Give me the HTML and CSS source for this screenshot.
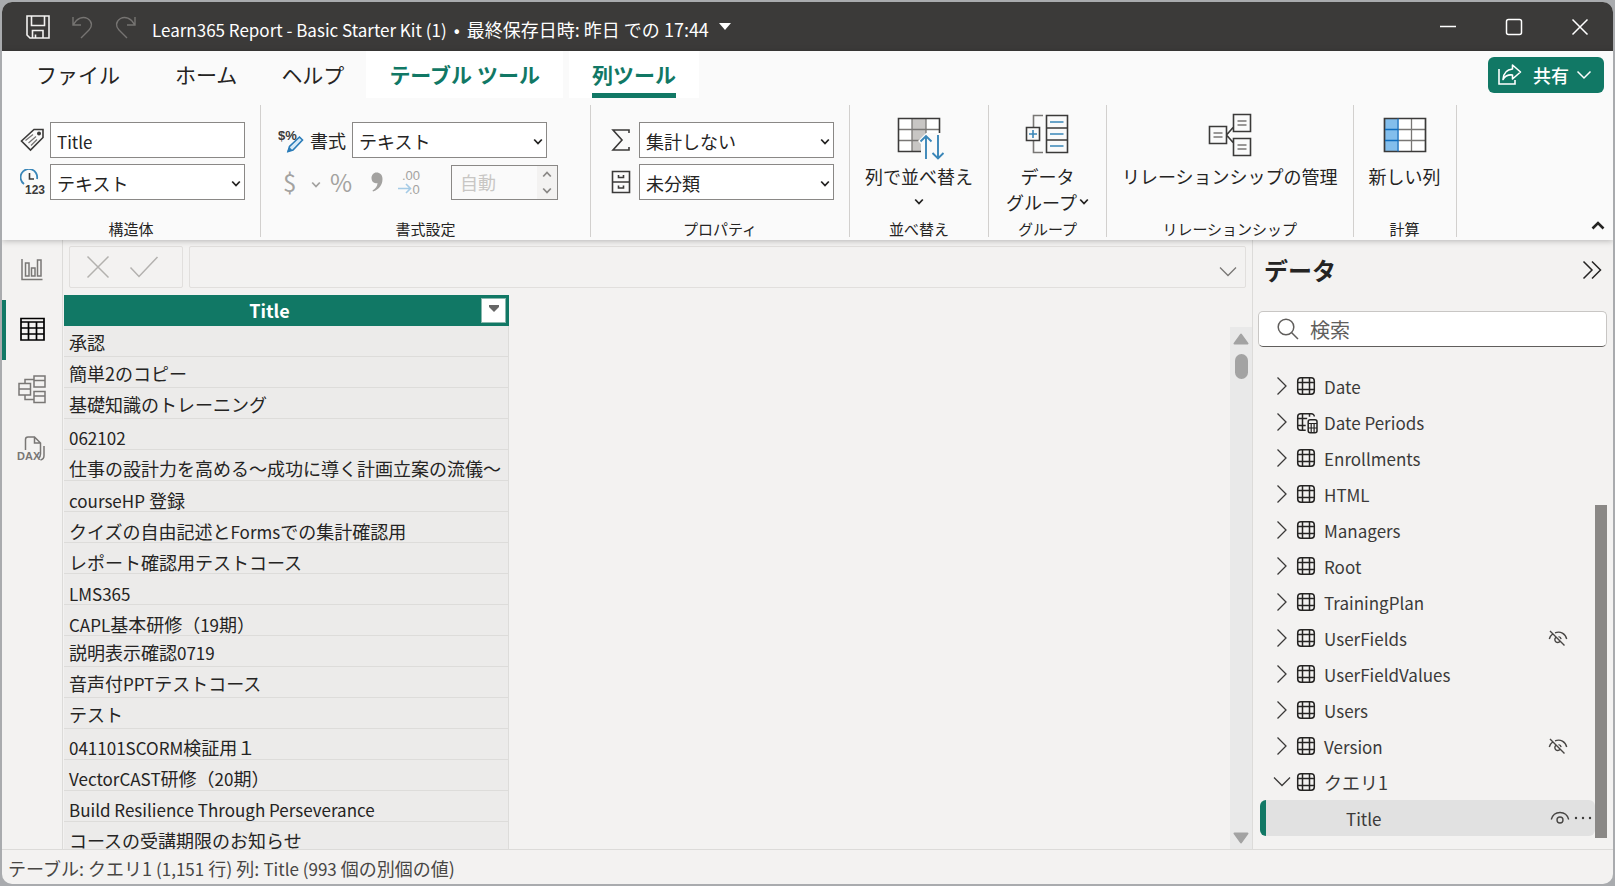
FILE: index.html
```
<!DOCTYPE html>
<html lang="ja">
<head>
<meta charset="utf-8">
<title>Learn365 Report - Basic Starter Kit (1)</title>
<link rel="stylesheet" href="styles.css">
</head>
<body>
<svg class="defs" aria-hidden="true">
  <symbol id="chev-right" viewBox="0 0 12 20"><path d="M1.500 1.500l8.500 8.500l-8.500 8.500" fill="none" stroke="currentColor" stroke-width="1.300"/></symbol>
  <symbol id="chev-down-wide" viewBox="0 0 18 12"><path d="M1 1.500l8 8l8-8" fill="none" stroke="currentColor" stroke-width="1.300"/></symbol>
  <symbol id="chev-small" viewBox="0 0 10 8"><path d="M1.200 1.500L5 5.500l3.800-4" fill="none" stroke="currentColor" stroke-width="1.800"/></symbol>
  <symbol id="tbl" viewBox="0 0 22 22"><g fill="none" stroke="#252423" stroke-width="1.500"><rect x="1.700" y="1.700" width="16.600" height="16.600" rx="3.200"/><path d="M6.500 1.700v16.600M13.500 1.700v16.600M1.700 6.500h16.600M1.700 13.500h16.600"/></g></symbol>
  <symbol id="tbl-calc" viewBox="0 0 22 22"><g fill="none" stroke="#252423" stroke-width="1.500"><path d="M18.300 4.500c0-1.700-1.300-2.800-3-2.800H4.700c-1.700 0-3 1.300-3 3v10.600c0 1.700 1.300 3 3 3h5M6.500 1.700v16.600M13.500 1.700v3M1.700 6.500h9.500M1.700 13.500h8"/><rect x="12.200" y="7.700" width="8.800" height="13" rx="2"/><path d="M12.200 11.500h8.800M12.200 16h8.800M15.200 11.500v9M18.100 11.500v9" stroke-width="1.200"/></g></symbol>
  <symbol id="eye" viewBox="0 0 20 16"><g fill="none" stroke="#484644" stroke-width="1.400"><path d="M1.300 9.500C2.500 5 6 2.500 10 2.500S17.500 5 18.700 9.500"/><circle cx="10" cy="10" r="3"/></g></symbol>
  <symbol id="eye-off" viewBox="0 0 20 16"><g fill="none" stroke="#484644" stroke-width="1.400"><path d="M1.300 9C2 6.500 3.200 5 4.600 4M7 2.800C12.500 .8 17.300 3.500 18.700 9M7.700 7.400A3 3 0 1 0 12 11.600M10.500 6.600a3 3 0 0 1 2.600 2.600M2 1l14.500 14.500"/></g></symbol>
</svg>

<div class="window">
  <header class="titlebar">
    <button class="tool" aria-label="保存"><svg width="24" height="24" viewBox="0 0 24 24" fill="none" stroke="#f3f2f1" stroke-width="1.600"><path d="M1 1h22v22H4l-3-3zM5.500 1v9.500h13V1M6.500 23v-7.500h10.500V23M9.500 23v-3.500"/></svg></button>
    <button class="tool" aria-label="元に戻す"><svg width="24" height="24" viewBox="0 0 24 24" fill="none" stroke="#767472" stroke-width="1.400"><path d="M3 2v8h8M3.500 9.500C7 3 13 1 17.500 3.500c5 3 5 8 1.500 11.500l-8 8"/></svg></button>
    <button class="tool" aria-label="やり直し"><svg width="24" height="24" viewBox="0 0 24 24" fill="none" stroke="#767472" stroke-width="1.400"><path d="M21 2v8h-8M20.500 9.500C17 3 11 1 6.500 3.500c-5 3-5 8-1.500 11.500l8 8"/></svg></button>
    <button class="doc-title"><span class="latin">Learn365 Report - Basic Starter Kit (1)</span><span class="dot">•</span>最終保存日時: 昨日 での 17:44
      <svg width="12" height="7" viewBox="0 0 12 7"><path d="M0 0h12L6 7z" fill="#fff"/></svg></button>
    <div class="win-buttons">
      <button aria-label="最小化"><svg width="18" height="18" viewBox="0 0 18 18"><path d="M1 8.500h16" stroke="#fff" stroke-width="1.500"/></svg></button>
      <button aria-label="最大化"><svg width="18" height="18" viewBox="0 0 18 18"><rect x="1.500" y="1.500" width="15" height="15" rx="2" fill="none" stroke="#fff" stroke-width="1.500"/></svg></button>
      <button aria-label="閉じる"><svg width="18" height="18" viewBox="0 0 18 18"><path d="M1.500 1.500l15 15M16.500 1.500l-15 15" stroke="#fff" stroke-width="1.500"/></svg></button>
    </div>
  </header>

  <div class="ribbon">
    <nav class="tabs">
      <button class="tab file">ファイル</button>
      <button class="tab">ホーム</button>
      <button class="tab">ヘルプ</button>
      <button class="tab context">テーブル ツール</button>
      <button class="tab context current"><span>列ツール</span></button>
      <button class="share"><svg width="26" height="24" viewBox="0 0 26 24" fill="none" stroke="#fff" stroke-width="1.600"><path d="M2 6v15h16v-4"/><path d="M15.500 2l8 7l-8 7v-4c-4.500-.5-7.500 1-9.500 4.500C6.500 10 10 6.500 15.500 6z" stroke-linejoin="round"/></svg>共有<svg class="share-chev" width="16" height="10" viewBox="0 0 16 10"><path d="M1.500 1.500L8 8l6.500-6.500" fill="none" stroke="#fff" stroke-width="1.500"/></svg></button>
    </nav>

    <div class="groups">
      <section class="group structure">
        <div class="rows">
          <div class="row">
            <label for="name"><svg width="25" height="24" viewBox="0 0 25 24" fill="none" stroke="#3b3a39" stroke-width="1.600"><path d="M14 1.500h9v8L10.500 22L1.500 13z"/><circle cx="19" cy="5.500" r="1.200" fill="#3b3a39"/><path d="M5.500 12.500L13 6.500M8.500 15L16 8.500M11 17.500l6-6" stroke="#797775" stroke-width="1.300"/></svg></label>
            <input id="name" class="field latin" type="text" value="Title">
          </div>
          <div class="row">
            <label for="dtype"><svg width="26" height="26" viewBox="0 0 26 26"><path d="M4 15A8.300 8.300 0 1 1 17 10" fill="none" stroke="#3a86b8" stroke-width="1.800"/><path d="M9.500 4v6h4.500" fill="none" stroke="#3b3a39" stroke-width="1.600"/><text class="icon-num" x="5" y="25">123</text></svg></label>
            <div class="combo"><select id="dtype" class="field"><option>テキスト</option></select><svg width="10" height="8"><use href="#chev-small"/></svg></div>
          </div>
        </div>
        <h2>構造体</h2>
      </section>

      <section class="group format">
        <div class="rows">
          <div class="row">
            <label class="with-text" for="fmt"><svg width="26" height="26" viewBox="0 0 26 26"><text class="icon-cur" x="0" y="13">$%</text><path d="M10 24.500l1.500-5L21.500 10l3 3l-9.500 10z" fill="#d5e9f7" stroke="#2b7cb8" stroke-width="1.600"/><path d="M9 25l2.500-5l2.500 3z" fill="#2b7cb8"/></svg><span>書式</span></label>
            <div class="combo"><select id="fmt" class="field"><option>テキスト</option></select><svg width="10" height="8"><use href="#chev-small"/></svg></div>
          </div>
          <div class="row formats">
            <button disabled class="dollar" aria-label="通貨">$<svg width="10" height="8"><use href="#chev-small"/></svg></button>
            <button disabled class="percent" aria-label="パーセント">%</button>
            <button disabled aria-label="桁区切り"><svg width="12" height="20" viewBox="0 0 12 20"><path d="M5.500.5c3.500 0 6 2.300 6 6.500C11.500 13 8 17.500 2 19.500l-.5-1c3-1.800 5-4.500 5-7.500C3 12 .5 9.500.5 6C.500 3 2.500.5 5.500.500z" fill="#a3a2a0"/></svg></button>
            <button disabled aria-label="小数点以下の桁数"><svg width="26" height="28" viewBox="0 0 26 28"><text class="icon-dec" x="5" y="12">.00</text><text class="icon-dec" x="12" y="26">.0</text><path d="M1 20.500h12M9 16l4.500 4.500L9 25" fill="none" stroke="#a5cbe6" stroke-width="1.600"/></svg></button>
            <div class="spinner"><input type="text" value="自動" disabled aria-label="小数点以下"><span><svg width="10" height="8" class="flip"><use href="#chev-small"/></svg><svg width="10" height="8"><use href="#chev-small"/></svg></span></div>
          </div>
        </div>
        <h2>書式設定</h2>
      </section>

      <section class="group props">
        <div class="rows">
          <div class="row">
            <label for="summ"><svg width="20" height="24" viewBox="0 0 20 24" fill="none" stroke="#3b3a39" stroke-width="1.600"><path d="M18 5V2H2l9 10L2 22h16v-3"/></svg></label>
            <div class="combo"><select id="summ" class="field"><option>集計しない</option></select><svg width="10" height="8"><use href="#chev-small"/></svg></div>
          </div>
          <div class="row">
            <label for="cat"><svg width="20" height="24" viewBox="0 0 20 24" fill="none" stroke="#3b3a39" stroke-width="1.600"><path d="M1.500 1.500h17v21h-17zM1.500 12h17M7.500 5v2.500h5V5M7.500 15.500V18h5v-2.500"/></svg></label>
            <div class="combo"><select id="cat" class="field"><option>未分類</option></select><svg width="10" height="8"><use href="#chev-small"/></svg></div>
          </div>
        </div>
        <h2>プロパティ</h2>
      </section>

      <section class="group">
        <button class="big"><svg width="48" height="46" viewBox="0 0 48 46" fill="none"><path d="M3.500 5.500h41v33h-41z" fill="#fff"/><path d="M17 5.500h14v33H17z" fill="#c8c6c4"/><path d="M3.500 16.500h41M3.500 27.500h41M17 5.500v33M31 5.500v33" stroke="#797775" stroke-width="1.300"/><path d="M3.500 5.500h41v33h-41z" stroke="#3b3a39" stroke-width="1.600"/><path d="M31 20l-8 8l3 3v16h22V20z" fill="#fafafa"/><path d="M31 46V23M25.500 28.500L31 23l5.500 5.500M43 22v23M37.500 40l5.500 5.500l5.500-5.500" stroke="#3a86b8" stroke-width="1.900"/></svg>列で並べ替え<span class="drop"><svg width="10" height="8"><use href="#chev-small"/></svg></span></button>
        <h2>並べ替え</h2>
      </section>

      <section class="group">
        <button class="big wide"><svg width="48" height="46" viewBox="0 0 48 46" fill="none" stroke="#3b3a39" stroke-width="1.600"><path d="M20 2.500h-9.500v12M20 39.500h-9.500v-12" stroke="#797775"/><path d="M23.500 2.500h21v37h-21zM23.500 15h21M23.500 27h21M3.500 14.500h13v13h-13z"/><path d="M27 9h13.500M27 21h13.500M27 33h13.500M6 21h8M10 17v8" stroke="#3a86b8"/></svg>データ<span class="drop">グループ<svg width="10" height="8"><use href="#chev-small"/></svg></span></button>
        <h2>グループ</h2>
      </section>

      <section class="group">
        <button class="big"><svg width="48" height="46" viewBox="0 0 48 46" fill="none" stroke="#3b3a39" stroke-width="1.600"><path d="M3.500 13.500h17v17h-17zM27.500 1.500h17v17h-17zM27.500 25.500h17v17h-17zM20.500 22l7-8M20.500 22l7 8"/><path d="M7.500 20h9M7.500 24h9M31.500 8h9M31.500 12h9M31.500 32h9M31.500 36h9" stroke="#797775" stroke-width="1.300"/></svg>リレーションシップの管理</button>
        <h2>リレーションシップ</h2>
      </section>

      <section class="group">
        <button class="big"><svg width="48" height="46" viewBox="0 0 48 46" fill="none"><path d="M3.500 5.500h41v33h-41z" fill="#fff"/><path d="M3.500 5.500h13v33h-13z" fill="#83beec"/><path d="M17 16.500h28M17 27.500h28M30.500 5.500v33" stroke="#797775" stroke-width="1.300"/><path d="M3.500 5.500h41v33h-41z" stroke="#3b3a39" stroke-width="1.700"/><path d="M17 5.500v33M4 16.500h13M4 27.500h13" stroke="#0f6cbd" stroke-width="1.400"/></svg>新しい列</button>
        <h2>計算</h2>
      </section>

      <button class="collapse" aria-label="リボンを折りたたむ"><svg width="14" height="9" viewBox="0 0 14 9"><path d="M1.500 7.500L7 2l5.500 5.500" fill="none" stroke="#252423" stroke-width="2.600"/></svg></button>
    </div>
  </div>

  <div class="body">
    <nav class="views">
      <button aria-label="レポート ビュー"><svg width="28" height="28" viewBox="0 0 28 28" fill="none" stroke="#797775" stroke-width="1.500"><path d="M4 4v20.500h20.500M7.500 8h3.500v13h-3.500zM13.500 13h3.500v8h-3.500zM19.500 5h3.500v16h-3.500z"/></svg></button>
      <button class="on" aria-label="テーブル ビュー"><svg width="28" height="28" viewBox="0 0 28 28" fill="none" stroke="#000" stroke-width="1.700"><path d="M3 3.500h23v21.500H3zM3 7h23M3 13h23M3 19h23M10.500 7v18M18.500 7v18"/></svg></button>
      <button aria-label="モデル ビュー"><svg width="30" height="30" viewBox="0 0 30 30" fill="none" stroke="#797775" stroke-width="1.500"><path d="M17 2h11v11H17zM17 6.500h11M17 17.500h11v11H17zM17 22h11M2 9.500h11.500v11.500H2zM2 15h11.500M8 9.500V5.500h9M8 21v4.500h9"/></svg></button>
      <button aria-label="DAX クエリ ビュー"><svg width="34" height="28" viewBox="0 0 34 28" fill="none" stroke="#797775" stroke-width="1.500"><path d="M10.500 15V4.500c0-1.700 1-2.500 2.500-2.500h6.500l6 6v11c0 2-1 3.500-2 4.500M19.500 2v6h6M29 11v9.500c0 2.500-1 4-3.500 4.500"/><text class="icon-dax" x="2" y="25">DAX</text></svg></button>
    </nav>

    <main class="main">
      <div class="formula">
        <div class="commit">
          <button aria-label="キャンセル"><svg width="24" height="24" viewBox="0 0 24 24"><path d="M1.500 1.500l21 21M22.500 1.500l-21 21" stroke="#b3b1af" stroke-width="1.500"/></svg></button>
          <button aria-label="確定"><svg width="30" height="24" viewBox="0 0 30 24"><path d="M1.500 12.500l8.500 9L28.500 2" fill="none" stroke="#b3b1af" stroke-width="1.500"/></svg></button>
        </div>
        <div class="expr"><input type="text" aria-label="数式"><svg width="18" height="12"><use href="#chev-down-wide"/></svg></div>
      </div>
      <div class="sheet">
        <div class="table-area">
          <table>
            <thead><tr><th><div class="head"><span>Title</span><button aria-label="フィルター"><svg width="10" height="7" viewBox="0 0 10 7"><path d="M0 0h10v2L5 7L0 2z" fill="#666"/></svg></button></div></th></tr></thead>
            <tbody>
              <tr><td>承認</td></tr>
              <tr><td>簡単2のコピー</td></tr>
              <tr><td>基礎知識のトレーニング</td></tr>
            </tbody>
            <tbody class="mid">
              <tr><td><span class="latin">062102</span></td></tr>
              <tr><td>仕事の設計力を高める～成功に導く計画立案の流儀～</td></tr>
            </tbody>
            <tbody class="low">
              <tr><td><span class="latin">courseHP</span> 登録</td></tr>
              <tr><td>クイズの自由記述と<span class="latin">Forms</span>での集計確認用</td></tr>
              <tr><td>レポート確認用テストコース</td></tr>
              <tr><td><span class="latin">LMS365</span></td></tr>
              <tr><td><span class="latin">CAPL</span>基本研修（<span class="latin">19</span>期）</td></tr>
            </tbody>
            <tbody>
              <tr><td>説明表示確認<span class="latin">0719</span></td></tr>
              <tr><td>音声付<span class="latin">PPT</span>テストコース</td></tr>
              <tr><td>テスト</td></tr>
            </tbody>
            <tbody class="mid">
              <tr><td><span class="latin">041101SCORM</span>検証用１</td></tr>
              <tr><td><span class="latin">VectorCAST</span>研修（<span class="latin">20</span>期）</td></tr>
              <tr><td><span class="latin">Build Resilience Through Perseverance</span></td></tr>
              <tr><td>コースの受講期限のお知らせ</td></tr>
            </tbody>
          </table>
        </div>
        <div class="vscroll" aria-hidden="true">
          <svg width="16" height="12" viewBox="0 0 16 12"><path d="M8 1.500L14.500 10.500h-13z" fill="#a3a3a3" stroke="#a3a3a3" stroke-width="2" stroke-linejoin="round"/></svg>
          <div class="thumb"></div>
          <svg class="end" width="16" height="12" viewBox="0 0 16 12"><path d="M8 10.500L14.500 1.500h-13z" fill="#a3a3a3" stroke="#a3a3a3" stroke-width="2" stroke-linejoin="round"/></svg>
        </div>
      </div>
    </main>

    <aside class="data">
      <div class="data-head"><h1>データ</h1><button aria-label="折りたたむ"><svg width="20" height="20" viewBox="0 0 20 20"><path d="M1.500 1.500l8.500 8.500l-8.500 8.500M10 1.500l8.500 8.500l-8.500 8.500" fill="none" stroke="#252423" stroke-width="1.500"/></svg></button></div>
      <label class="search"><svg width="22" height="22" viewBox="0 0 22 22" fill="none" stroke="#605e5c" stroke-width="1.500"><circle cx="9" cy="9" r="7.800"/><path d="M14.500 14.500l6.500 6.500"/></svg><input type="text" placeholder="検索" aria-label="検索"></label>
      <div class="tree-wrap">
        <ul class="tree">
          <li><svg class="arrow"><use href="#chev-right"/></svg><svg class="ico"><use href="#tbl"/></svg><span class="latin">Date</span></li>
          <li><svg class="arrow"><use href="#chev-right"/></svg><svg class="ico"><use href="#tbl-calc"/></svg><span class="latin">Date Periods</span></li>
          <li><svg class="arrow"><use href="#chev-right"/></svg><svg class="ico"><use href="#tbl"/></svg><span class="latin">Enrollments</span></li>
          <li><svg class="arrow"><use href="#chev-right"/></svg><svg class="ico"><use href="#tbl"/></svg><span class="latin">HTML</span></li>
          <li><svg class="arrow"><use href="#chev-right"/></svg><svg class="ico"><use href="#tbl"/></svg><span class="latin">Managers</span></li>
          <li><svg class="arrow"><use href="#chev-right"/></svg><svg class="ico"><use href="#tbl"/></svg><span class="latin">Root</span></li>
          <li><svg class="arrow"><use href="#chev-right"/></svg><svg class="ico"><use href="#tbl"/></svg><span class="latin">TrainingPlan</span></li>
          <li><svg class="arrow"><use href="#chev-right"/></svg><svg class="ico"><use href="#tbl"/></svg><span class="latin">UserFields</span><svg class="eye"><use href="#eye-off"/></svg></li>
          <li><svg class="arrow"><use href="#chev-right"/></svg><svg class="ico"><use href="#tbl"/></svg><span class="latin">UserFieldValues</span></li>
          <li><svg class="arrow"><use href="#chev-right"/></svg><svg class="ico"><use href="#tbl"/></svg><span class="latin">Users</span></li>
          <li><svg class="arrow"><use href="#chev-right"/></svg><svg class="ico"><use href="#tbl"/></svg><span class="latin">Version</span><svg class="eye"><use href="#eye-off"/></svg></li>
          <li><svg class="arrow open"><use href="#chev-down-wide"/></svg><svg class="ico"><use href="#tbl"/></svg><span>クエリ1</span></li>
          <li class="selected"><span class="latin">Title</span><svg class="eye"><use href="#eye"/></svg><button class="more" aria-label="その他"><svg width="18" height="4" viewBox="0 0 18 4" fill="#3b3a39"><circle cx="2" cy="2" r="1.200"/><circle cx="9" cy="2" r="1.200"/><circle cx="16" cy="2" r="1.200"/></svg></button></li>
        </ul>
        <div class="tree-scroll" aria-hidden="true"></div>
      </div>
    </aside>
  </div>

  <footer class="status">テーブル: クエリ1 <span class="latin">(1,151</span> 行) 列: <span class="latin">Title (993</span> 個の別個の値)</footer>
</div>
</body>
</html>
```
FILE: styles.css
```
* { box-sizing: border-box; }

html, body { height: 100%; }

body {
  margin: 0;
  padding: 2px;
  background: #a9abae;
  color: #252423;
  font: 18px/26px "Noto Sans CJK JP", "Noto Sans", sans-serif;
}

button, input, select {
  margin: 0;
  padding: 0;
  border: 0;
  background: none;
  color: inherit;
  font: inherit;
}

svg { display: block; flex: none; }
.defs { position: absolute; width: 0; height: 0; }
h1, h2, ul { margin: 0; padding: 0; }
.latin { font-size: 17px; line-height: 1; }

.window {
  display: flex;
  flex-direction: column;
  height: 100%;
  border-radius: 10px;
  overflow: hidden;
  background: #f3f2f1;
}

/* Title bar */
.titlebar {
  display: flex;
  align-items: center;
  gap: 20px;
  height: 49px;
  flex: none;
  padding-left: 24px;
  background: #3b3a39;
  color: #fff;
}
.doc-title { display: flex; align-items: baseline; margin-left: -6px; padding-top: 4px; white-space: nowrap; }
.dot { padding: 0 7px; }
.doc-title svg { align-self: center; margin: 0 0 5px 10px; }
.win-buttons { display: flex; gap: 48px; margin-left: auto; padding-right: 24px; }

/* Ribbon */
.ribbon {
  flex: none;
  background: #fafafa;
  box-shadow: 0 1px 6px rgba(0, 0, 0, .25);
  z-index: 1;
}
.tabs { display: flex; align-items: stretch; height: 47px; padding-left: 12px; }
.tab { padding: 0 22px 2px; font-size: 21px; white-space: nowrap; }
.tab.file { margin-right: 11px; }
.tab.context { padding: 0 23px 2px; margin-right: 6px; background: #fff; color: #117865; font-weight: 700; }
.tab.context.current { padding-bottom: 0; }
.tab.current span { display: flex; align-items: center; height: 47px; border-bottom: 5px solid #117865; padding-top: 3px; }
.share {
  display: flex;
  align-items: center;
  gap: 10px;
  height: 36px;
  margin: 6px 9px 0 auto;
  padding: 0 12px 0 9px;
  border-radius: 6px;
  background: #117865;
  color: #fff;
  font-weight: 500;
}
.share-chev { margin-left: -3px; }

.groups { display: flex; padding: 7px 0 3px; }
.group {
  display: flex;
  flex-direction: column;
  justify-content: space-between;
  align-items: center;
  height: 132px;
  padding-top: 8px;
  border-right: 1px solid #d2d0ce;
}
.group h2 { font-size: 15px; line-height: 16px; font-weight: 400; white-space: nowrap; }
.rows { display: flex; flex-direction: column; gap: 6px; padding-top: 9px; }
.row { display: flex; align-items: center; height: 36px; }
.row label { flex: none; width: 30px; }
.structure .rows { padding-left: 18px; padding-right: 15px; }
.format .rows { padding-left: 17px; padding-right: 32px; }
.format .row label { display: flex; align-items: center; gap: 6px; width: 74px; }
.props .rows { padding-left: 20px; padding-right: 15px; }
.props .row label { width: 28px; }
.field { width: 195px; height: 36px; padding: 2px 6px 0; border: 1px solid #8a8886; background: #fff; appearance: none; }
.combo { display: grid; align-items: center; }
.combo > * { grid-area: 1 / 1; }
.combo > svg { justify-self: end; margin: 3px 4px 0 0; pointer-events: none; }

.formats { color: #a3a2a0; }
.formats button { display: flex; align-items: center; }
.dollar { width: 52px; padding-left: 5px; gap: 15px; font-size: 24px; }
.dollar svg { margin-top: 5px; }
.percent { width: 41px; font-size: 24px; }
.formats button + button + button { width: 26px; }
.spinner { display: flex; width: 107px; height: 35px; margin-left: 28px; border: 1px solid #8a8886; }
.spinner input { width: 85px; padding: 0 8px; color: #c8c6c4; }
.spinner span { display: flex; flex-direction: column; justify-content: space-between; padding: 4px 5px; background: #f3f2f1; color: #8a8886; }
.flip { transform: rotate(180deg); }

.big { display: flex; flex-direction: column; align-items: center; padding: 0 15px; white-space: nowrap; }
.big.wide { padding: 0 17px; }
.big > svg { margin-bottom: 4px; overflow: visible; }
.drop { display: flex; align-items: center; height: 26px; gap: 2px; }
.collapse { margin: auto 8px 7px auto; }

.icon-num { font: 700 12px "Liberation Sans", sans-serif; fill: #3b3a39; }
.icon-cur { font: 700 13px "Liberation Sans", sans-serif; fill: #3b3a39; }
.icon-dec { font: 13px/14px "Liberation Sans", sans-serif; fill: #a3a2a0; }
.icon-dax { font: 700 11px "Liberation Sans", sans-serif; fill: #797775; stroke: none; }

/* Work area */
.body { display: grid; grid-template-columns: 61px minmax(0, 1fr) 361px; flex: 1; min-height: 0; }

.views { border-right: 1px solid #dcdbd9; }
.views button { display: flex; align-items: center; justify-content: center; width: 100%; height: 60px; padding: 0 4px 3px 0; border-left: 4px solid transparent; }
.views .on { border-left-color: #117865; }

.main { display: flex; flex-direction: column; min-width: 0; min-height: 0; }
.formula { display: flex; gap: 6px; padding: 6px 6px 0; }
.commit, .expr { display: flex; align-items: center; height: 42px; border: 1px solid #e1dfdd; border-radius: 2px; }
.commit { gap: 19px; width: 114px; padding-left: 16px; }
.expr { flex: 1; padding-right: 8px; color: #797775; }
.expr input { flex: 1; height: 40px; }
.expr svg { margin-top: 10px; }

.sheet { display: flex; justify-content: space-between; flex: 1; min-height: 0; }
.table-area { padding: 7px 0 0 1px; overflow: hidden; }
table { border-collapse: separate; border-spacing: 0; width: 445px; background: #ecebea; }
th { height: 31px; padding: 0; background: #117865; color: #fff; font-weight: 700; }
.head { display: flex; align-items: center; padding-right: 3px; }
.head span { flex: 1; padding: 0 6px 2px 0; }
.head button { display: flex; align-items: flex-start; justify-content: center; width: 25px; height: 25px; padding-top: 6px; border: 1px solid #8ab8ae; background: #fff; }
td { height: 31px; padding: 5px 5px 0; border-bottom: 1px solid #dddcda; border-right: 1px solid #dddcda; line-height: 22px; vertical-align: top; white-space: nowrap; }
.mid td { padding-top: 7px; }
.low td { padding-top: 8px; }

.vscroll { display: flex; flex-direction: column; align-items: center; width: 22px; margin-top: 39px; padding: 6px 0 5px; background: #e9e9e9; }
.thumb { width: 13px; height: 25px; margin-top: 9px; border-radius: 7px; background: #a3a3a3; }
.end { margin-top: auto; }

/* Data pane */
.data { display: flex; flex-direction: column; min-height: 0; padding: 10px 6px 0 5px; border-left: 1px solid #dcdbd9; }
.data-head { display: flex; align-items: center; justify-content: space-between; padding: 0 5px 0 6px; }
h1 { font-size: 24px; line-height: 40px; font-weight: 700; }
.search { display: flex; align-items: center; gap: 11px; height: 36px; margin-top: 21px; padding: 0 18px; border: 1px solid #c8c6c4; border-bottom: 1px solid #605e5c; border-radius: 5px; background: #fff; }
.search input { flex: 1; min-width: 0; padding-top: 2px; font-size: 20px; }
.search input::placeholder { color: #605e5c; }

.tree-wrap { display: flex; flex: 1; min-height: 0; margin-top: 21px; padding-bottom: 11px; }
.tree { flex: 1; padding-left: 2px; list-style: none; }
.tree li { display: flex; align-items: center; height: 36px; padding: 0 27px 0 16px; border-radius: 6px; color: #3b3a39; }
.tree .arrow { width: 12px; height: 20px; }
.tree .arrow.open { width: 18px; height: 12px; margin: 0 -3px; }
.tree .ico { width: 22px; height: 22px; margin: 2px 6px 0 8px; }
.tree .eye { width: 20px; height: 16px; margin-left: auto; }
.tree .selected { padding: 0 3px 0 80px; border-left: 6px solid #117865; background: #e1e1e1; }
.more { margin-left: 4px; }
.tree-scroll { align-self: flex-end; width: 12px; height: 333px; background: #8a8886; }

.status { flex: none; height: 35px; padding: 5px 6px 0; border-top: 1px solid #dcdbd9; color: #484644; }
```
